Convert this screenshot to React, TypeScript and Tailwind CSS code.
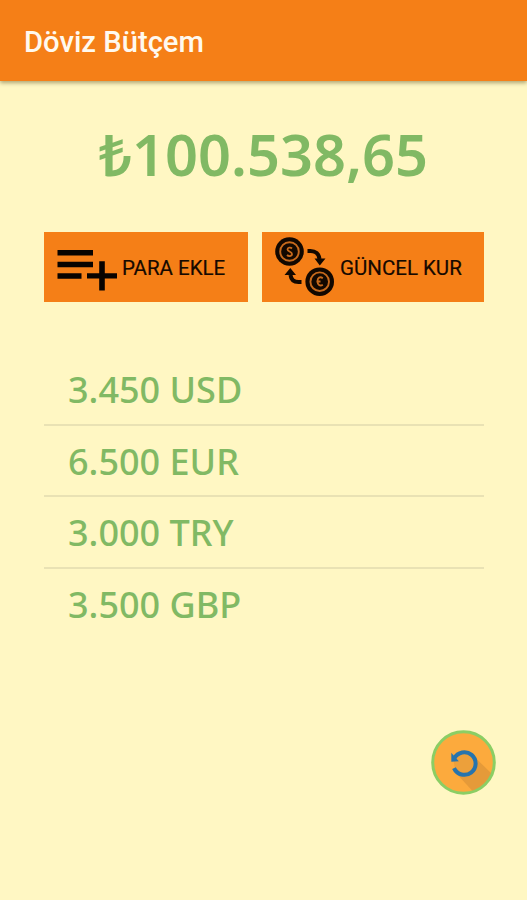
import React from "react";

const balances = ["3.450 USD", "6.500 EUR", "3.000 TRY", "3.500 GBP"];

function AddListIcon() {
  return (
    <svg className="h-[44px] w-[60px] shrink-0" viewBox="0 0 60 44" fill="#080300">
      <path d="M.5 3H36v5.500H.5zM.5 14.700H36v5.500H.5zM.5 26.200h24v5.500H.5zM30 26.200h12.200v-12h5.600v12H60v5.300H47.800v12h-5.600v-12H30z" />
    </svg>
  );
}

function ExchangeIcon() {
  return (
    <svg className="h-[62px] w-[62px] shrink-0" viewBox="0 0 62 62" fill="none">
      <circle cx="15.500" cy="15.500" r="14.300" fill="#120800" />
      <circle cx="15.500" cy="15.500" r="9.300" stroke="#c76a1c" strokeWidth="1.900" />
      <path d="M18 12.500c-1.500-1.500-4.500-1-4.500 1s4.500 2 4.500 4.500-3.500 2.500-5 1" stroke="#c76a1c" strokeWidth="1.800" />
      <circle cx="45.700" cy="45.700" r="14.300" fill="#120800" />
      <circle cx="45.700" cy="45.700" r="9.300" stroke="#c76a1c" strokeWidth="1.900" />
      <path d="M48.800 42.200c-2.800-2-5.300-.5-5.300 3s2.500 5.500 5.300 3.500M42.500 45.500h4" stroke="#c76a1c" strokeWidth="1.800" />
      <path d="M33.500 15h3c5 0 8.500 3 9 8M27.500 46h-3c-5 0-7.500-3-8-7" stroke="#120800" strokeWidth="4" />
      <path d="M40.500 22.500h11l-5.700 7zM10.500 39h11.500l-5.700-7z" fill="#120800" />
    </svg>
  );
}

function RefreshButton() {
  return (
    <button aria-label="Yenile" className="mt-[90px] mr-[31px] size-[65px] self-end">
      <svg className="size-full" viewBox="0 0 65 65" fill="none">
        <circle cx="32.500" cy="32.500" r="31" fill="#fcaa3d" />
        <path d="M43.500 27 60.500 43.500C56 53 50 58.500 42 61.500L23.500 41.500z" fill="#e59a39" />
        <circle cx="32.800" cy="32.800" r="10" fill="#eca03b" />
        <circle cx="32.500" cy="32.500" r="30.800" stroke="#8bce64" strokeWidth="3" />
        <path d="M23.300 28.300a11.300 11.300 0 1 1-.3 9.800" stroke="#2774ad" strokeWidth="4" />
        <path d="M20.300 22.800v8.900l7.500-.4z" fill="#2774ad" />
      </svg>
    </button>
  );
}

export default function App() {
  return (
    <main className="flex h-[900px] w-[527px] flex-col overflow-hidden bg-[#fff7c3]">
      <header className="flex h-[81px] shrink-0 items-center bg-[#f57f17] pl-6 shadow-[0_2px_4px_rgba(75,65,20,0.45)]">
        <h1 className="mt-[4px] font-['Roboto',sans-serif] text-[29.200px] leading-none font-medium whitespace-nowrap text-[#fff9ef]">
          Döviz Bütçem
        </h1>
      </header>

      <p className="mt-[33px] text-center font-['Noto_Sans',sans-serif] text-[57.700px] leading-[80px] font-semibold whitespace-nowrap text-[#81b964]">
        ₺100.538,65
      </p>

      <div className="mt-[38px] flex h-[70px] shrink-0 gap-[14px] pl-[44px] font-['Roboto',sans-serif] text-[20.500px] text-[#160900]">
        <button className="flex w-[204px] items-center gap-[5px] bg-[#f57f17] pl-[13px] whitespace-nowrap">
          <span className="pt-[3px]"><AddListIcon /></span>
          <span className="pt-[2px] [-webkit-text-stroke:0.2px]">PARA EKLE</span>
        </button>
        <button className="flex w-[222px] items-center gap-[4px] bg-[#f57f17] pl-[12px] whitespace-nowrap">
          <ExchangeIcon />
          <span className="pt-[2px] [-webkit-text-stroke:0.2px]">GÜNCEL KUR</span>
        </button>
      </div>

      <ul className="mt-[52px] mr-[43px] ml-[44px] font-['Noto_Sans',sans-serif] text-[36px] font-medium text-[#81b964]">
        {balances.map((label) => (
          <li key={label} className="flex h-[71.500px] items-center border-b-2 border-[#e9e2b4] pt-[3px] pl-6 whitespace-nowrap last:border-transparent">
            {label}
          </li>
        ))}
      </ul>
      <RefreshButton />
    </main>
  );
}
